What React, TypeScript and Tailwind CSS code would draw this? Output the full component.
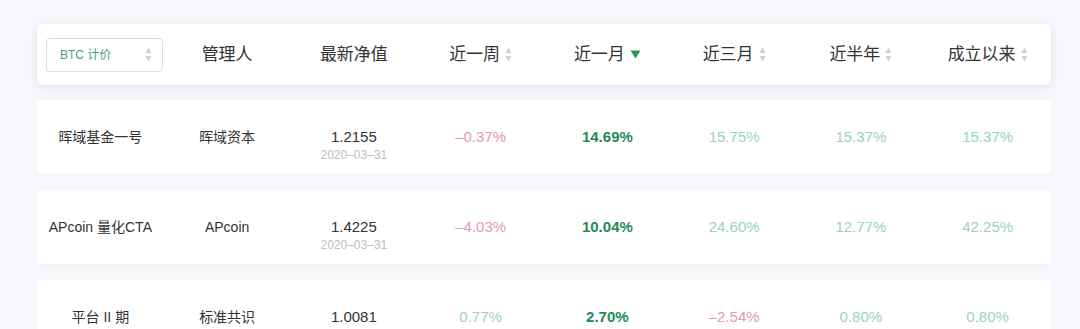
const font = { fontFamily: '"Liberation Sans", "Noto Sans CJK SC", sans-serif' }

type Tone = 'down' | 'up' | 'strong'

interface Row {
  name: string
  manager: string
  nav: string
  date?: string
  values: [string, Tone][]
}

// last row's date falls below the fold, so it isn't rendered
const rows: Row[] = [
  {
    name: '晖域基金一号',
    manager: '晖域资本',
    nav: '1.2155',
    date: '2020–03–31',
    values: [
      ['–0.37%', 'down'],
      ['14.69%', 'strong'],
      ['15.75%', 'up'],
      ['15.37%', 'up'],
      ['15.37%', 'up'],
    ],
  },
  {
    name: 'APcoin 量化CTA',
    manager: 'APcoin',
    nav: '1.4225',
    date: '2020–03–31',
    values: [
      ['–4.03%', 'down'],
      ['10.04%', 'strong'],
      ['24.60%', 'up'],
      ['12.77%', 'up'],
      ['42.25%', 'up'],
    ],
  },
  {
    name: '平台 II 期',
    manager: '标准共识',
    nav: '1.0081',
    values: [
      ['0.77%', 'up'],
      ['2.70%', 'strong'],
      ['–2.54%', 'down'],
      ['0.80%', 'up'],
      ['0.80%', 'up'],
    ],
  },
]

const toneClass: Record<Tone, string> = {
  down: 'text-[#e699ab]',
  up: 'text-[#9ad4b6]',
  strong: 'text-[#23895b] font-bold',
}

function SortIcon() {
  return (
    <svg width="7" height="15" viewBox="0 0 7 15" className="shrink-0">
      <path d="M3.5 0.5 L6.5 6 L0.5 6 Z" fill="#cfcfcf" />
      <path d="M3.5 14.5 L6.5 9 L0.5 9 Z" fill="#cfcfcf" />
    </svg>
  )
}

function ActiveSort() {
  return (
    <svg width="11" height="9" viewBox="0 0 11 9" className="shrink-0">
      <path d="M0.5 0.5 L10.5 0.5 L5.5 8.5 Z" fill="#1f9a57" />
    </svg>
  )
}

function HeadCell({ label, sort }: { label: string; sort?: 'idle' | 'active' }) {
  return (
    <div className="flex items-center justify-center gap-[5px] text-[17px] text-[#333]">
      <span>{label}</span>
      {sort === 'idle' && <SortIcon />}
      {sort === 'active' && <ActiveSort />}
    </div>
  )
}

export default function App() {
  return (
    <div className="h-[329px] overflow-hidden bg-[#f6f7fb] pt-[24px] pl-[37px] pr-[29px]" style={font}>
      <div className="grid h-[61px] grid-cols-8 items-center rounded-[6px] bg-white shadow-[0_2px_8px_rgba(20,30,60,0.09)]">
        <div className="pl-[9px]">
          <div className="flex h-[34px] w-[117px] items-center justify-between rounded-[4px] border border-[#dcdde3] pl-[13px] pr-[10px]">
            <span className="text-[12px] text-[#4e9c79]">BTC 计价</span>
            <SortIcon />
          </div>
        </div>
        <HeadCell label="管理人" />
        <HeadCell label="最新净值" />
        <HeadCell label="近一周" sort="idle" />
        <HeadCell label="近一月" sort="active" />
        <HeadCell label="近三月" sort="idle" />
        <HeadCell label="近半年" sort="idle" />
        <HeadCell label="成立以来" sort="idle" />
      </div>

      <div className="mt-[15px] flex flex-col gap-[16px]">
        {rows.map((r) => (
          <div
            key={r.name}
            className="grid h-[74px] shrink-0 grid-cols-8 items-center rounded-[4px] bg-white text-center shadow-[0_1px_3px_rgba(20,30,60,0.03)]"
          >
            <div className="text-[14px] text-[#333]">{r.name}</div>
            <div className="text-[14px] text-[#333]">{r.manager}</div>
            <div className={`flex flex-col items-center ${r.date ? 'pt-[17px]' : ''}`}>
              <span className="text-[15px] leading-[20px] text-[#333]">{r.nav}</span>
              {r.date && <span className="text-[12px] leading-[17px] text-[#bdbdbd]">{r.date}</span>}
            </div>
            {r.values.map(([v, t], i) => (
              <div key={i} className={`text-[15px] ${toneClass[t]}`}>
                {v}
              </div>
            ))}
          </div>
        ))}
      </div>
    </div>
  )
}
